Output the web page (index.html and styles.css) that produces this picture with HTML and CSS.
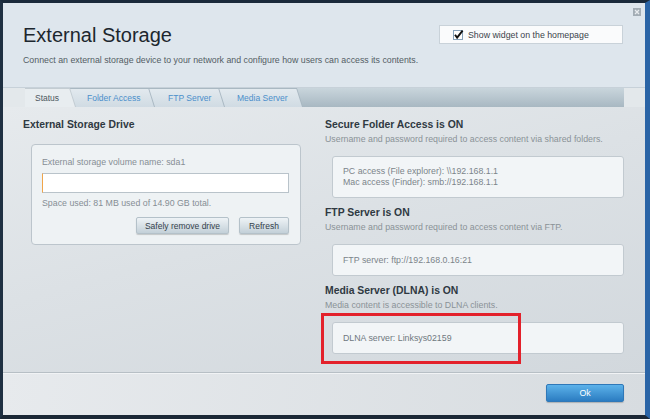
FILE: index.html
```html
<!DOCTYPE html>
<html>
<head>
<meta charset="utf-8">
<title>External Storage</title>
<link rel="stylesheet" href="styles.css">
</head>
<body>
<div class="window">
  <div class="dialog">
    <header class="header">
      <div class="intro">
        <h1 class="title">External Storage</h1>
        <p class="subtitle">Connect an external storage device to your network and configure how users can access its contents.</p>
      </div>
      <div class="widget">
        <svg class="check" width="10" height="10" viewBox="0 0 10 10">
          <rect x="0.5" y="0.5" width="9" height="9" fill="#ffffff" stroke="#86a2bb" stroke-width="1"/>
          <path d="M2 4.8 L4.1 7.6 L9.6 0.6" fill="none" stroke="#111111" stroke-width="1.9"/>
        </svg>
        <span>Show widget on the homepage</span>
      </div>
    </header>
    <nav class="tabs">
      <div class="tab-bar">
        <div class="tab tab-status active"><span>Status</span></div>
        <div class="tab tab-folder"><span>Folder Access</span></div>
        <div class="tab tab-ftp"><span>FTP Server</span></div>
        <div class="tab tab-media"><span>Media Server</span></div>
      </div>
    </nav>
    <main class="content">
      <section class="col-left">
        <h2 class="heading">External Storage Drive</h2>
        <div class="drive-box">
          <div class="label">External storage volume name: sda1</div>
          <div class="input"></div>
          <div class="label space">Space used: 81 MB used of 14.90 GB total.</div>
          <div class="btn-row">
            <button class="btn btn-remove">Safely remove drive</button>
            <button class="btn btn-refresh">Refresh</button>
          </div>
        </div>
      </section>
      <section class="col-right">
        <div class="section">
          <h2 class="heading">Secure Folder Access is ON</h2>
          <p class="desc">Username and password required to access content via shared folders.</p>
          <div class="info-box two-line">
            <div>PC access (File explorer): \\192.168.1.1</div>
            <div>Mac access (Finder): smb://192.168.1.1</div>
          </div>
        </div>
        <div class="section">
          <h2 class="heading">FTP Server is ON</h2>
          <p class="desc">Username and password required to access content via FTP.</p>
          <div class="info-box">FTP server: ftp://192.168.0.16:21</div>
        </div>
        <div class="section">
          <h2 class="heading">Media Server (DLNA) is ON</h2>
          <p class="desc">Media content is accessible to DLNA clients.</p>
          <div class="info-box dark">DLNA server: Linksys02159</div>
        </div>
      </section>
    </main>
    <footer class="footer">
      <button class="ok">Ok</button>
    </footer>
  </div>
  <svg class="close" width="8" height="8" viewBox="0 0 8 8">
    <rect x="0" y="0" width="8" height="8" fill="#a3adb5"/>
    <path d="M2 2 L6 6 M6 2 L2 6" stroke="#e8ecef" stroke-width="1.3"/>
  </svg>
  <div class="highlight"></div>
</div>
</body>
</html>
```

FILE: styles.css
```css
* { box-sizing: border-box; }
html, body { margin: 0; padding: 0; }
body {
  width: 650px;
  height: 419px;
  overflow: hidden;
  background: #1b2836;
  font-family: "Liberation Sans", Arial, sans-serif;
}
.window {
  position: relative;
  width: 650px;
  height: 419px;
  border-style: solid;
  border-width: 3px 5px 4px 3px;
  border-color: #1a2a3b #2a64a6 #1b2836 #1f3042;
}
.dialog {
  display: flex;
  flex-direction: column;
  height: 100%;
}

/* header */
.header {
  flex: none;
  height: 85px;
  display: flex;
  justify-content: space-between;
  align-items: flex-start;
  padding: 20px 22px 0 20px;
  background: #dee6ed;
  border-bottom: 1px solid #c7d1d9;
}
.title {
  margin: 0;
  font-size: 20px;
  line-height: 24px;
  font-weight: normal;
  color: #1c262e;
}
.subtitle {
  margin: 7px 0 0;
  font-size: 8.8px;
  line-height: 12px;
  color: #535d64;
}
.widget {
  margin-top: 2px;
  width: 184px;
  height: 19px;
  display: flex;
  align-items: center;
  gap: 5px;
  padding-left: 13px;
  background: #fafbfc;
  border: 1px solid #c9d2d9;
  font-size: 8.8px;
  color: #3b444b;
}
.check { flex: none; overflow: visible; }

/* tabs */
.tabs {
  flex: none;
  height: 19px;
  padding: 0 21px 0 22px;
  background: #e3e8eb;
}
.tab-bar {
  display: flex;
  height: 19px;
  background: linear-gradient(#c9d5dc, #a8b8c2);
}
.tab {
  position: relative;
  height: 19px;
  flex: none;
  background: #a9b8c2;
  clip-path: polygon(0 0, calc(100% - 6px) 0, 100% 100%, 0 100%);
  font-size: 8.5px;
  line-height: 19px;
  padding-top: 1px;
  color: #4b8fcb;
}
.tab::before {
  content: "";
  position: absolute;
  inset: 0;
  background: linear-gradient(#e3eaef, #d0dbe3);
  clip-path: polygon(0 1px, calc(100% - 6.6px) 1px, calc(100% - 1px) 100%, 0 100%);
}
.tab span { position: relative; }
.tab + .tab { margin-left: -6px; }
.tab.active { color: #4d5860; background: #c3ccd2; }
.tab.active::before { background: #e8edf0; }
.tab-status { width: 51px; padding-left: 10px; z-index: 4; }
.tab-folder { width: 85px; padding-left: 17px; z-index: 3; }
.tab-ftp { width: 76px; padding-left: 19px; z-index: 2; }
.tab-media { width: 84px; padding-left: 18px; z-index: 1; }

/* content */
.content {
  flex: 1;
  display: grid;
  grid-template-columns: 287px 1fr;
  column-gap: 15px;
  align-content: start;
  padding: 11px 21px 0 20px;
  background: linear-gradient(165deg, #e6eaed 0%, #dce1e5 45%, #d2d8dd 100%);
}
.heading {
  margin: 0;
  font-size: 10.4px;
  line-height: 14px;
  font-weight: bold;
  color: #2f3942;
}
.desc {
  margin: 0;
  font-size: 8.8px;
  line-height: 15px;
  color: #8a9297;
}
.section + .section { margin-top: 8px; }
.info-box {
  margin: 9px 0 0 7px;
  padding: 9px 10px;
  background: #f2f5f7;
  border: 1px solid #c2cad0;
  border-radius: 3px;
  font-size: 8.8px;
  line-height: 12px;
  color: #7b848a;
}
.info-box.two-line {
  line-height: 10.5px;
  padding-bottom: 10px;
}
.info-box.dark { color: #6f787e; }

.drive-box {
  margin: 12px 0 0 8px;
  width: 270px;
  padding: 11px 11px 10px 10px;
  background: #eef2f4;
  border: 1px solid #bcc5cc;
  border-radius: 4px;
}
.label {
  font-size: 8.8px;
  line-height: 12px;
  color: #868e94;
}
.input {
  margin-top: 5px;
  height: 20px;
  background: #ffffff;
  border: 1px solid #b9c3ca;
  border-left-color: #f0a54a;
}
.space { margin-top: 4px; }
.btn-row {
  display: flex;
  justify-content: flex-end;
  gap: 10px;
  margin-top: 8px;
}
.btn {
  height: 17px;
  padding: 0;
  font-family: inherit;
  font-size: 8.5px;
  color: #33414b;
  border: 1px solid #b4c1c9;
  border-radius: 2px;
  background: linear-gradient(#eef3f6, #c3d0d8);
  box-shadow: 0 1px 1px rgba(0, 0, 0, 0.18);
}
.btn-remove { width: 93px; }
.btn-refresh { width: 50px; }

/* footer */
.footer {
  flex: none;
  height: 43px;
  display: flex;
  justify-content: flex-end;
  align-items: flex-start;
  padding: 11px 21px 0 0;
  border-top: 1px solid #b7bfc5;
  box-shadow: inset 0 1px 0 #f1f3f5;
  background: linear-gradient(100deg, #e7eaed, #d7dce0);
}
.ok {
  width: 78px;
  height: 18px;
  padding: 0;
  font-family: inherit;
  font-size: 8.8px;
  color: #ffffff;
  border: 1px solid #2f78b8;
  border-radius: 2px;
  background: linear-gradient(#5cb2ea, #2b7cc1);
  box-shadow: 0 1px 1px rgba(0, 0, 0, 0.2);
}

/* overlays */
.close {
  position: absolute;
  left: 630px;
  top: 5px;
}
.highlight {
  position: absolute;
  left: 318px;
  top: 310px;
  width: 200px;
  height: 51px;
  border: 3px solid #e3212b;
}
```
